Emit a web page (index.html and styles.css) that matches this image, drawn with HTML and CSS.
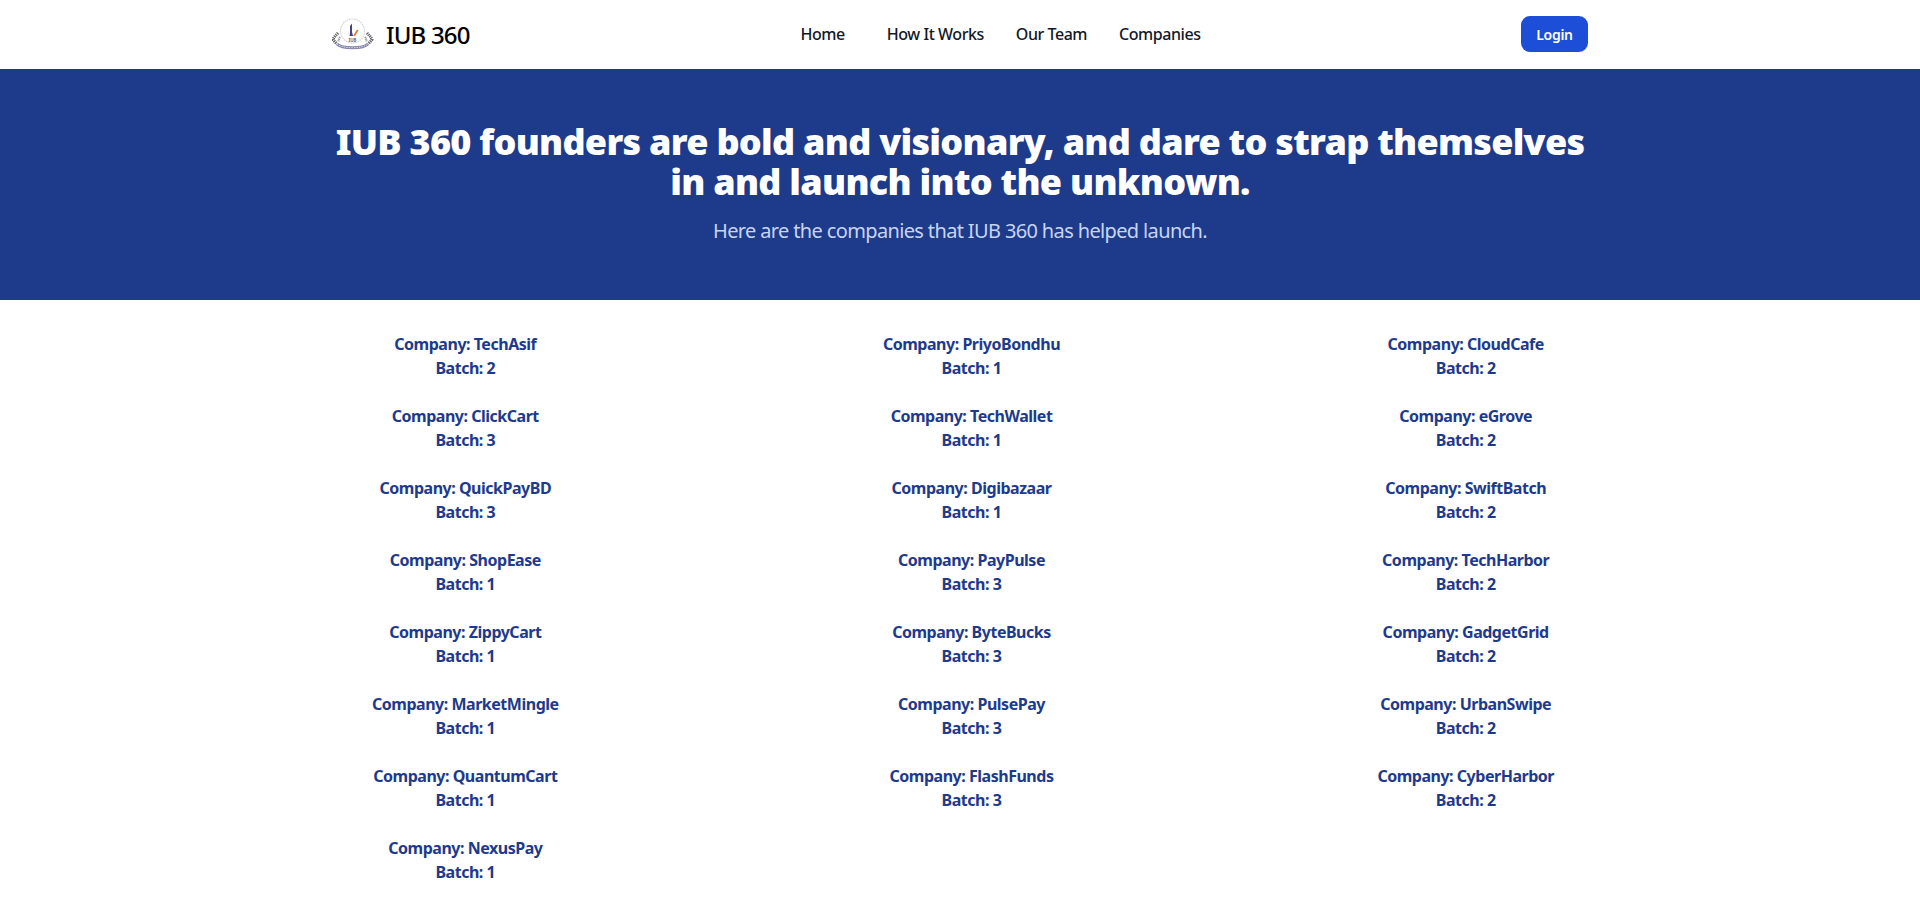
FILE: index.html
```html
<!DOCTYPE html>
<html lang="en">
  <head>
    <meta charset="utf-8">
    <title>IUB 360 - Companies</title>
    <link rel="stylesheet" href="styles.css">
  </head>
  <body>
    <header class="navbar">
      <div class="navInner">
        <a class="brand" href="#">
          <svg class="logo" width="42" height="33" viewBox="0 0 42 33">
            <circle cx="20.5" cy="13" r="12" fill="#fff" stroke="#d4d4d4" stroke-width="1.200" stroke-dasharray="1.600 .8"/>
            <path d="M18 8l2-2.500v8.500l1 4h-3z" fill="#4a3d8c"/>
            <path d="M16.500 13l1.500 5h-1z" fill="#b9a9c9"/>
            <path d="M21 18l4-6.500 1.500 1-3.500 5.500z" fill="#e27a2c"/>
            <text class="logoText" x="20.500" y="23.500">IUB</text>
            <path d="M6 15c-2 2-4 4-5 6.500 1 1.500 2.500 3 4 4.500M35 15c2 2 4 4 5 6.500-1 1.500-2.500 3-4 4.500" fill="none" stroke="#5f5f68" stroke-width="3" stroke-dasharray="1.200 .8"/>
            <path d="M8 19c-1 1.500-1.500 3-1.500 4.500M33 19c1 1.500 1.500 3 1.500 4.500" fill="none" stroke="#8d8d96" stroke-width="2" stroke-dasharray="1 .8"/>
            <path d="M5 26c5 5 26 5 31 0" fill="none" stroke="#8484ad" stroke-width="3"/>
            <path d="M5 26c5 5 26 5 31 0" fill="none" stroke="#dcdce8" stroke-width="1" stroke-dasharray="1.500 1"/>
          </svg>
          <span class="brandName">IUB 360</span>
        </a>
        <nav class="navLinks">
          <a class="homeLink" href="#">Home</a>
          <a href="#">How It Works</a>
          <a href="#">Our Team</a>
          <a href="#">Companies</a>
        </nav>
        <a class="loginBtn" href="#">Login</a>
      </div>
    </header>

    <section class="hero">
      <h1>IUB 360 founders are bold and visionary, and dare to strap themselves in and launch into the unknown.</h1>
      <p>Here are the companies that IUB 360 has helped launch.</p>
    </section>

    <main class="companyList">
      <div class="column">
        <div class="company"><p>Company: TechAsif</p><p>Batch: 2</p></div>
        <div class="company"><p>Company: ClickCart</p><p>Batch: 3</p></div>
        <div class="company"><p>Company: QuickPayBD</p><p>Batch: 3</p></div>
        <div class="company"><p>Company: ShopEase</p><p>Batch: 1</p></div>
        <div class="company"><p>Company: ZippyCart</p><p>Batch: 1</p></div>
        <div class="company"><p>Company: MarketMingle</p><p>Batch: 1</p></div>
        <div class="company"><p>Company: QuantumCart</p><p>Batch: 1</p></div>
        <div class="company"><p>Company: NexusPay</p><p>Batch: 1</p></div>
      </div>
      <div class="column middleColumn">
        <div class="company"><p>Company: PriyoBondhu</p><p>Batch: 1</p></div>
        <div class="company"><p>Company: TechWallet</p><p>Batch: 1</p></div>
        <div class="company"><p>Company: Digibazaar</p><p>Batch: 1</p></div>
        <div class="company"><p>Company: PayPulse</p><p>Batch: 3</p></div>
        <div class="company"><p>Company: ByteBucks</p><p>Batch: 3</p></div>
        <div class="company"><p>Company: PulsePay</p><p>Batch: 3</p></div>
        <div class="company"><p>Company: FlashFunds</p><p>Batch: 3</p></div>
      </div>
      <div class="column">
        <div class="company"><p>Company: CloudCafe</p><p>Batch: 2</p></div>
        <div class="company"><p>Company: eGrove</p><p>Batch: 2</p></div>
        <div class="company"><p>Company: SwiftBatch</p><p>Batch: 2</p></div>
        <div class="company"><p>Company: TechHarbor</p><p>Batch: 2</p></div>
        <div class="company"><p>Company: GadgetGrid</p><p>Batch: 2</p></div>
        <div class="company"><p>Company: UrbanSwipe</p><p>Batch: 2</p></div>
        <div class="company"><p>Company: CyberHarbor</p><p>Batch: 2</p></div>
      </div>
    </main>
  </body>
</html>
```

FILE: styles.css
```css
* {
  box-sizing: border-box;
}

body {
  margin: 0;
  background-color: #fff;
  font-family: "Noto Sans", "Open Sans", sans-serif;
  color: #111827;
}

a {
  color: inherit;
  text-decoration: none;
}

p {
  margin: 0;
}

.navbar {
  height: 69px;
  background-color: #fff;
}

.navInner {
  width: 1280px;
  height: 100%;
  margin: 0 auto;
  padding: 0 12px;
  display: flex;
  align-items: center;
  justify-content: space-between;
}

.brand {
  display: flex;
  align-items: center;
  gap: 10px;
  width: 148px;
}

.logoText {
  font-size: 4.500px;
  font-weight: 700;
  fill: #6a6a86;
  text-anchor: middle;
}

.brandName {
  font-size: 24px;
  line-height: 32px;
  font-weight: 500;
  color: #000;
  letter-spacing: -0.8px;
  margin-left: 2px;
}

.navLinks {
  display: flex;
  gap: 32px;
  font-size: 16px;
  font-weight: 500;
  letter-spacing: -0.45px;
  margin-top: -2px;
}

.homeLink {
  margin-right: 10px;
}

.loginBtn {
  width: 67px;
  height: 36px;
  margin-bottom: 1px;
  display: flex;
  align-items: center;
  justify-content: center;
  border-radius: 9px;
  background-color: #1d4ed8;
  color: #fff;
  font-size: 14px;
  font-weight: 600;
  letter-spacing: -0.3px;
}

.hero {
  height: 231px;
  padding-top: 53px;
  background-color: #1e3a8a;
  text-align: center;
}

.hero h1 {
  width: 1280px;
  margin: 0 auto;
  font-size: 36px;
  line-height: 40px;
  font-weight: 900;
  letter-spacing: -0.72px;
  color: #fff;
}

.hero p {
  margin-top: 15px;
  font-size: 20px;
  line-height: 28px;
  color: #c6d6f2;
  letter-spacing: -0.64px;
}

.companyList {
  width: 1280px;
  margin: 0 auto;
  padding: 32px 46px 0 52px;
  display: flex;
  justify-content: space-between;
  align-items: flex-start;
}

.column {
  display: flex;
  flex-direction: column;
  gap: 24px;
}

.middleColumn {
  margin-left: 7px;
}

.company {
  text-align: center;
  font-size: 16px;
  line-height: 24px;
  font-weight: 700;
  color: #1e3a8a;
  letter-spacing: -0.48px;
}
```
